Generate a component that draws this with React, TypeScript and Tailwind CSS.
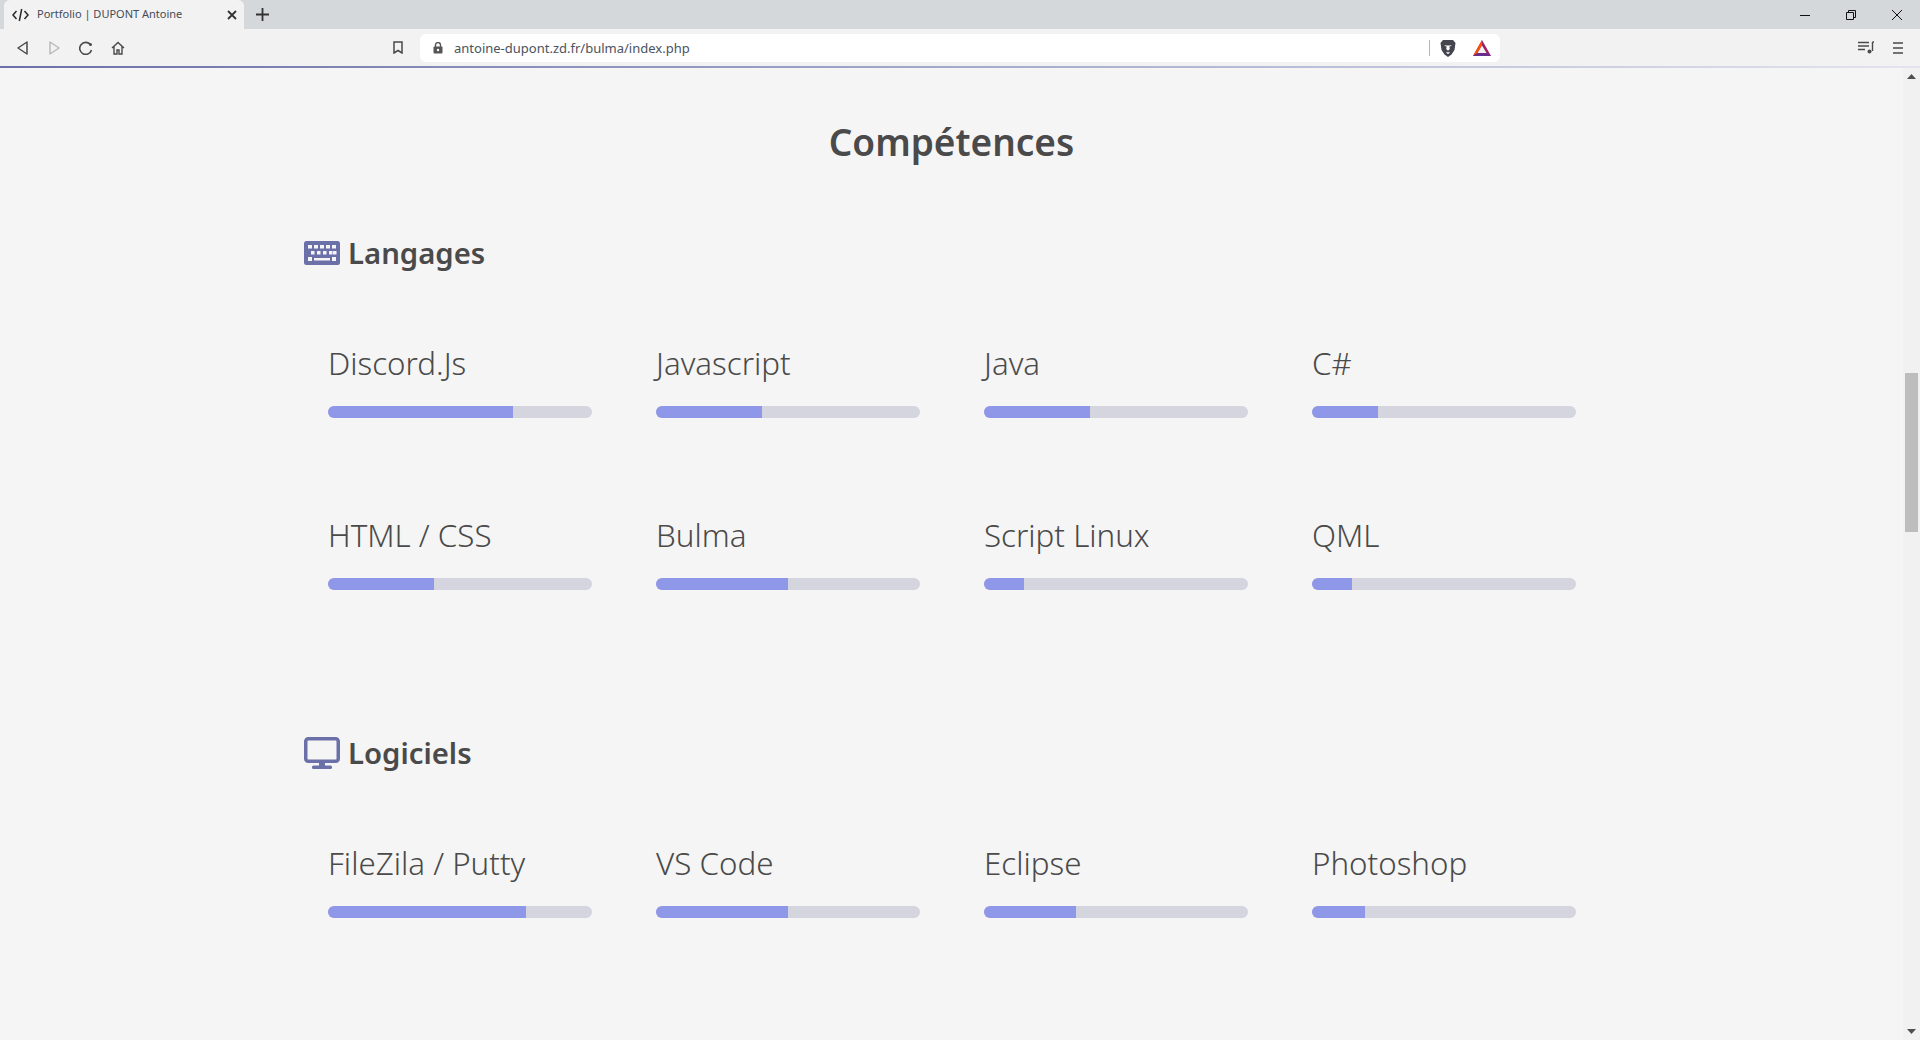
import React from "react";

const langs: [string, number][] = [
  ["Discord.Js", 70], ["Javascript", 40], ["Java", 40], ["C#", 25],
  ["HTML / CSS", 40], ["Bulma", 50], ["Script Linux", 15], ["QML", 15],
];
const softs: [string, number][] = [
  ["FileZila / Putty", 75], ["VS Code", 50], ["Eclipse", 35], ["Photoshop", 20],
];

function Skill({ name, value }: { name: string; value: number }) {
  return (
    <div className="w-[264px]">
      <div className="h-[46px] text-[31.3px] leading-[46px] font-light text-[#4a4a4a] whitespace-nowrap">{name}</div>
      <div className="mt-5 h-3 w-full overflow-hidden rounded-md bg-[#d5d5e0]">
        <div className="h-full bg-[#8f97e8]" style={{ width: `${value}%` }} />
      </div>
    </div>
  );
}

function SkillGrid({ items }: { items: [string, number][] }) {
  return (
    <div className="ml-[328px] grid grid-cols-[repeat(4,264px)] gap-x-16 gap-y-[94px]">
      {items.map(([n, v]) => <Skill key={n} name={n} value={v} />)}
    </div>
  );
}

function Keyboard() {
  return (
    <svg width="36" height="24" viewBox="0 0 36 24" className="mt-[2px] shrink-0">
      <rect width="36" height="24" rx="2.5" fill="#6c70a8" />
      <g fill="#f5f5f5">
        {[4, 10, 16, 22, 28].map((x) => <rect key={x} x={x} y="4" width="4" height="3.5" />)}
        {[7, 13, 19, 25, 29].map((x) => <rect key={x} x={x} y="10" width="3.5" height="3.5" />)}
        <rect x="4" y="16" width="4" height="4" />
        <rect x="10" y="17" width="16" height="2.5" />
        <rect x="28" y="16" width="4" height="4" />
      </g>
    </svg>
  );
}

function Monitor() {
  return (
    <svg width="36" height="32" viewBox="0 0 36 32" className="mt-[2px] shrink-0">
      <rect x="1.75" y="1.75" width="32.5" height="22.5" rx="2.5" fill="none" stroke="#6c70a8" strokeWidth="3.5" />
      <rect x="15" y="25" width="6" height="4" fill="#6c70a8" />
      <rect x="8" y="28.5" width="20" height="3.5" rx="1.5" fill="#6c70a8" />
    </svg>
  );
}

function Heading({ icon, children }: { icon: React.ReactNode; children: React.ReactNode }) {
  return (
    <div className="ml-[304px] flex h-10 items-center gap-2 text-[29.3px] font-semibold text-[#4a4a4a]">
      {icon}
      <span className="pt-1">{children}</span>
    </div>
  );
}

function Chrome() {
  const ink = "#4a4a4a";
  return (
    <div className="shrink-0 font-['Noto_Sans',sans-serif]">
      <div className="flex h-[29px] items-stretch bg-[#d5d8db]">
        <div className="ml-1 flex w-[240px] items-center rounded-t-md bg-[#f2f2f2] pl-2 pr-[7px]">
          <svg width="17" height="14" viewBox="0 0 17 14" fill="none" stroke="#2a2a2a" strokeWidth="1.5" className="shrink-0">
            <path d="M4.5 3 1 7l3.5 4M12.500 3 16 7l-3.500 4M9.700 1 7.300 13" />
          </svg>
          <span className="ml-2 flex-1 whitespace-nowrap text-[11px] text-[#454c57]">Portfolio | DUPONT Antoine</span>
          <svg width="10" height="10" viewBox="0 0 10 10" stroke="#333" strokeWidth="1.800" className="shrink-0">
            <path d="M1 1l8 8M9 1 1 9" />
          </svg>
        </div>
        <div className="ml-3 flex items-center">
          <svg width="13" height="13" viewBox="0 0 13 13" stroke="#333" strokeWidth="1.800">
            <path d="M6.500 0v13M0 6.500h13" />
          </svg>
        </div>
        <div className="ml-auto flex items-center">
          <svg width="10" height="10" viewBox="0 0 10 10" stroke="#111" className="mr-9"><path d="M0 5.500h10" /></svg>
          <svg width="10" height="10" viewBox="0 0 10 10" fill="none" stroke="#111" className="mr-9">
            <path d="M.5 2.500h7v7h-7zM2.500 2.500v-2h7v7h-2" />
          </svg>
          <svg width="10" height="10" viewBox="0 0 10 10" stroke="#111" className="mr-[18px]"><path d="M0 0l10 10M10 0 0 10" /></svg>
        </div>
      </div>
      <div className="flex h-[37px] items-center bg-[#f2f2f2]">
        <svg width="11" height="14" viewBox="0 0 11 14" fill="none" stroke={ink} strokeWidth="1.500" className="ml-[17px] shrink-0">
          <path d="M10 1v12L1 7z" strokeLinejoin="round" />
        </svg>
        <svg width="11" height="14" viewBox="0 0 11 14" fill="none" stroke="#b9b9b9" strokeWidth="1.500" className="ml-[21px] shrink-0">
          <path d="M1 1v12l9-6z" strokeLinejoin="round" />
        </svg>
        <svg width="14" height="14" viewBox="0 0 14 14" fill="none" stroke={ink} strokeWidth="1.600" className="ml-[19px] shrink-0">
          <path d="M12.500 9a6 6 0 1 1-1.200-5.500" />
          <circle cx="11.500" cy="3.500" r="1.500" fill={ink} stroke="none" />
        </svg>
        <svg width="14" height="14" viewBox="0 0 14 14" fill="none" stroke={ink} strokeWidth="1.400" className="ml-[18px] shrink-0">
          <path d="M1 7l6-5.500L13 7M3 5.500V13h3V9h2v4h3V5.500" />
        </svg>
        <svg width="10" height="13" viewBox="0 0 10 13" fill="none" stroke={ink} strokeWidth="1.500" className="ml-[268px] shrink-0">
          <path d="M1 1h8v11L5 9.500 1 12z" />
        </svg>
        <div className="ml-[17px] flex h-7 w-[1080px] items-center rounded-md bg-white">
          <svg width="10" height="12" viewBox="0 0 10 12" className="ml-[13px] shrink-0">
            <path d="M2.500 5V3a2.500 2.500 0 0 1 5 0v2" fill="none" stroke="#555" strokeWidth="1.400" />
            <rect x="0.500" y="4.500" width="9" height="7" rx="1" fill="#555" />
            <circle cx="5" cy="8" r="1.200" fill="#fff" />
          </svg>
          <span className="ml-[11px] flex-1 whitespace-nowrap pt-[2px] text-[13px] text-[#4a5360]">antoine-dupont.zd.fr/bulma/index.php</span>
          <div className="h-4 w-px bg-[#b5b5b5]" />
          <svg width="16" height="18" viewBox="0 0 16 18" className="ml-[10px] shrink-0">
            <path d="M3 1h10l2.500 3-1 7-3 4.500L8 18l-3.500-2.500-3-4.500-1-7z" fill="#44464f" />
            <path d="M4.500 6.500 7 7.500 6.500 10 8 11.500 9.500 10 9 7.500l2.500-1M6.500 13.500h3L8 15z" fill="#fff" stroke="#fff" strokeWidth=".5" />
          </svg>
          <svg width="18" height="16" viewBox="0 0 18 16" className="ml-[17px] mr-[9px] shrink-0">
            <path d="M9 0 0 16h18z" fill="#9e1f63" />
            <path d="M9 0 0 16l4-2.800L9 5z" fill="#ff5000" />
            <path d="M0 16h18l-3.700-2.800H4z" fill="#662d91" />
            <path d="M9 5.500 4.500 13h9z" fill="#f2f2f2" />
          </svg>
        </div>
        <svg width="16" height="13" viewBox="0 0 16 13" fill="none" stroke={ink} strokeWidth="1.400" className="ml-auto mr-[19px] shrink-0">
          <path d="M0 1.500h11M0 5h11M0 8.500h7M14.500 1v9" />
          <path d="M14.500 1H16" />
          <circle cx="11.500" cy="10.500" r="2" fill={ink} stroke="none" />
        </svg>
        <svg width="10" height="12" viewBox="0 0 10 12" stroke={ink} strokeWidth="1.500" className="mr-[17px] shrink-0">
          <path d="M0 1h10M0 6h10M0 11h10" />
        </svg>
      </div>
      <div className="h-[2px] bg-gradient-to-r from-[#6c70a8] to-[#e3e4ee]" />
    </div>
  );
}

export default function App() {
  return (
    <div className="flex h-[1040px] w-[1920px] flex-col overflow-hidden bg-[#f5f5f5]">
      <Chrome />
      <div className="flex min-h-0 flex-1">
        <main className="min-w-0 flex-1 overflow-hidden font-['Noto_Sans',sans-serif]">
          <h1 className="mt-[50px] h-12 text-center text-[37px] font-semibold leading-[48px] text-[#4a4a4a]">Compétences</h1>
          <div className="mt-[66px]"><Heading icon={<Keyboard />}>Langages</Heading></div>
          <div className="mt-[68px]"><SkillGrid items={langs} /></div>
          <div className="mt-[142px]"><Heading icon={<Monitor />}>Logiciels</Heading></div>
          <div className="mt-[68px]"><SkillGrid items={softs} /></div>
        </main>
        <div className="flex w-[17px] shrink-0 flex-col items-center bg-[#f1f1f1]">
          <svg width="9" height="5" viewBox="0 0 9 5" className="mt-[6px]"><path d="M4.500 0 9 5H0z" fill="#505050" /></svg>
          <div className="mt-[294px] h-[159px] w-[13px] bg-[#bdbdbd]" />
          <svg width="9" height="5" viewBox="0 0 9 5" className="mt-auto mb-[6px]"><path d="M0 0h9L4.500 5z" fill="#505050" /></svg>
        </div>
      </div>
    </div>
  );
}
